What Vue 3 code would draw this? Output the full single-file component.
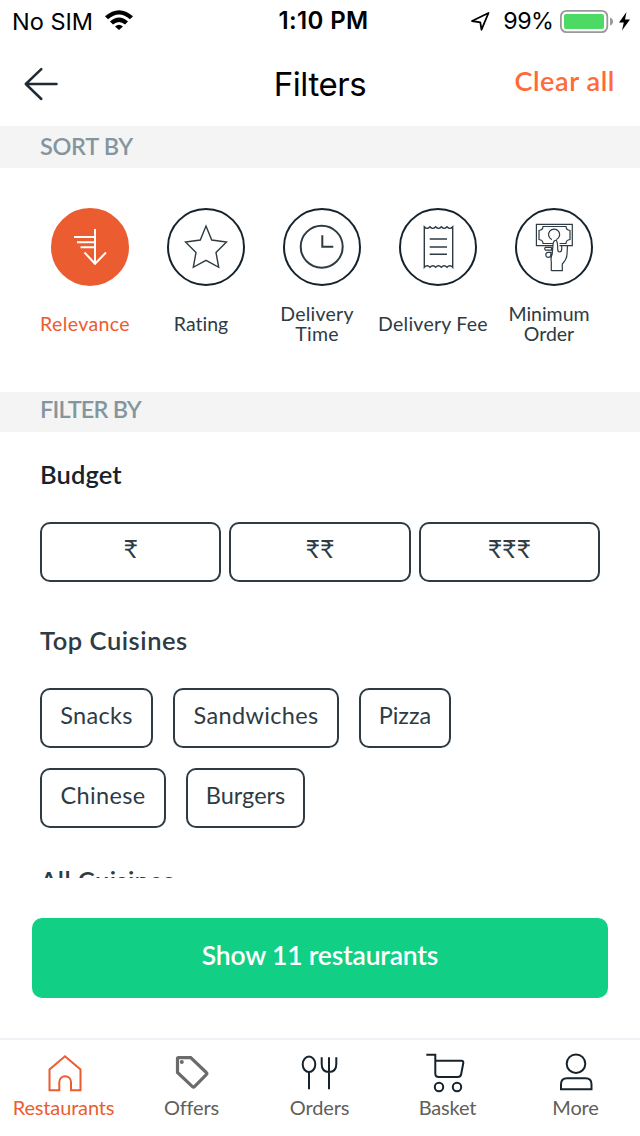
<script setup>
const sorts = [
  { id: 'relevance', label: 'Relevance', active: true },
  { id: 'rating', label: 'Rating' },
  { id: 'time', label: 'Delivery Time' },
  { id: 'fee', label: 'Delivery Fee' },
  { id: 'minimum', label: 'Minimum Order' },
]
const budgets = ['₹', '₹₹', '₹₹₹']
const cuisines = ['Snacks', 'Sandwiches', 'Pizza', 'Chinese', 'Burgers']
const tabs = ['Restaurants', 'Offers', 'Orders', 'Basket', 'More']
</script>

<template>
  <main class="screen">
    <header class="status">
      <div class="left">
        <span>No SIM</span>
        <svg class="wifi" width="28" height="20" viewBox="0 0 28 20"><path d="M0 6.2Q14-5.8 28 6.2L25 9.3Q14-.3 3 9.3ZM5 11.4Q14 3.6 23 11.4L20 14.5Q14 9.3 8 14.5ZM10 16.4Q14 13.2 18 16.4L14 20Z" /></svg>
      </div>
      <strong>1:10 PM</strong>
      <div class="right">
        <svg class="loc" width="20" height="20" viewBox="0 0 20 20"><path d="M2 10 18.5 2 11.5 18.7 10.3 11.3Z" /></svg>
        <span class="percent">99%</span>
        <svg class="battery" width="71" height="23" viewBox="0 0 71 23">
          <rect x=".9" y=".9" width="46.4" height="21.2" rx="5.5" class="shell" />
          <rect x="4" y="4" width="40" height="15" rx="2" class="charge" />
          <path d="M50 7.5q3 1 3 4t-3 4Z" class="nub" />
          <path d="M66.5 2 59 12.5h4.8L62 20.5 70 9.5h-5Z" />
        </svg>
      </div>
    </header>

    <nav class="head">
      <svg class="back" width="36" height="34" viewBox="0 0 36 34"><path d="M17.3 2.2 1.8 17 17.3 32M1.8 17H32.5" /></svg>
      <h1>Filters</h1>
      <a>Clear all</a>
    </nav>

    <section class="content">
      <h2 class="band sortband">SORT BY</h2>
      <div class="sorts">
        <div v-for="s in sorts" :key="s.id" class="sort" :class="[s.id, { active: s.active }]">
          <svg class="disc" width="78" height="78" viewBox="0 0 78 78">
            <circle class="ring" cx="39" cy="39" r="38" />
            <path v-if="s.id === 'relevance'" class="w2" d="M44 21V55.5M33.5 44.5 44 55.8 55 44.5M23 29H44M26 34.3H44M29.5 39.3H44" />
            <path v-if="s.id === 'rating'" d="M39 18 44.7 32 59.5 34 49 44.5 51.7 59.3 39 52.3 26.3 59.3 29 44.5 18.5 34 33.3 32Z" />
            <g v-if="s.id === 'time'" class="w2"><circle cx="38.7" cy="38.7" r="21" /><path d="M39.3 27.3V38.8H50.3" /></g>
            <path v-if="s.id === 'fee'" d="M25.3 59.3V18.8q2.84 3.2 5.68 0 2.84 3.2 5.68 0 2.84 3.2 5.68 0 2.84 3.2 5.68 0 2.84 3.2 5.68 0V59.3q-2.84-3.2-5.68 0-2.84-3.2-5.68 0-2.84-3.2-5.68 0-2.84-3.2-5.68 0-2.84-3.2-5.68 0ZM30.7 31H48M30.7 39H48M30.7 46.3H48" />
            <path v-if="s.id === 'minimum'" class="thin" d="M37.5 37.7H21.4V16.4H57.3V37.7H44.5M37.5 35.5H28q0-3.5-4-4V22.5q4-.5 4-4H51q0 3.5 4 4V31.5q-4 .5-4 4H44.5M36.8 31.6a5.5 5.5 0 1 1 4.6 0M36.3 62.7H47.3V56Q52 51 52 46L52.5 38M36.3 62.7V54Q35.5 50 37.2 46L38.2 35Q39 32 41.2 32.5 42.7 33.5 42.7 41q0 3 2 3t2-3V37.7M36.7 39.3H30.5q-1.600 1.400 0 2.800H36.500V39.300M36 44.400h-3a2.500 2.500 0 1 0 2.700 3.200Z" />
          </svg>
          <div class="label">{{ s.label }}</div>
        </div>
      </div>

      <h2 class="band filterband">FILTER BY</h2>
      <h3 class="dark">Budget</h3>
      <div class="budgets"><button v-for="b in budgets" :key="b">{{ b }}</button></div>
      <h3 class="top">Top Cuisines</h3>
      <div class="chips"><button v-for="c in cuisines" :key="c" :class="c.toLowerCase()">{{ c }}</button></div>
      <h3 class="all">All Cuisines</h3>
    </section>

    <button class="show">Show 11 restaurants</button>

    <footer class="tabs">
      <div v-for="(t, i) in tabs" :key="t" class="tab" :class="{ active: i === 0 }">
        <svg width="40" height="40" viewBox="0 0 40 40">
          <path v-if="i === 0" d="M5.5 38.3V17.5L21 4.3 36.5 17.5V38.3H27V30a5.85 5.85 0 0 0-11.7 0V38.3Z" />
          <g v-if="i === 1" class="tag"><path d="M6.5 5.7H18.7L34.3 20.5Q35.5 21.5 34.3 22.6L22.5 34.6Q21.5 35.5 20.5 34.6L5.5 20.5V6.7Q5.5 5.7 6.5 5.7Z" /><circle cx="9.8" cy="10" r="2" /></g>
          <g v-if="i === 2"><ellipse cx="9" cy="12.3" rx="6.3" ry="7.7" /><path d="M9 20V37.3M29 5.3V37.3M21.7 5.3V12q0 8 7.3 8t7.3-8V5.3" /></g>
          <g v-if="i === 3"><path d="M-1.7 2.8H7.3V21.5Q7.3 25 10.8 25H29.5Q32.7 25 33.2 22L35.3 11Q35.5 8.7 33.3 8.7H7.3" /><circle cx="11" cy="35" r="4.2" /><circle cx="29" cy="35" r="4.2" /></g>
          <g v-if="i === 4"><circle cx="20" cy="11.7" r="9.3" /><path d="M5 37.3V32.3Q5 26.3 11 26.3H29.5Q35.5 26.3 35.5 32.3V37.3Z" /></g>
        </svg>
        <span>{{ t }}</span>
      </div>
    </footer>
  </main>
</template>

<style>
body { margin: 0; background: #fff; }
</style>
<style scoped>
.screen { width: 640px; height: 1136px; display: flex; flex-direction: column; background: #fff; overflow: hidden; color: #2e3b43; font-family: Lato, "Noto Sans", sans-serif; font-variant-ligatures: none; }
svg { display: block; fill: none; overflow: visible; flex: none; }
h1, h2, h3 { margin: 0; font-weight: 400; }
button { font: inherit; color: inherit; background: none; border: 0; padding: 0; margin: 0; letter-spacing: inherit; }

.status { height: 41px; display: grid; grid-template-columns: 1fr 100px 1fr; align-items: center; font: 400 23.5px/41px Inter, sans-serif; color: #000; }
.status strong { font-weight: 600; font-size: 24px; line-height: 42px; letter-spacing: 0.4px; white-space: nowrap; text-align: center; padding-left: 7px; }
.status svg { fill: #000; }
.left { display: flex; align-items: center; gap: 12px; padding-left: 12px; }
.wifi { margin-top: -2px; }
.right { display: flex; align-items: center; justify-content: flex-end; padding-right: 9px; }
.status .loc { fill: none; stroke: #000; stroke-width: 1.8; stroke-linejoin: round; margin-right: 13px; }
.percent { font-size: 23.3px; line-height: 42px; letter-spacing: -0.5px; }
.battery { margin-left: 6.5px; }
.status .shell { fill: none; stroke: #999; stroke-width: 1.8; }
.status .charge { fill: #4cd964; }
.status .nub { fill: #999; }

.head { height: 85px; display: grid; grid-template-columns: 1fr 120px 1fr; align-items: center; padding: 0 24px; }
.back { stroke: #1e2b35; stroke-width: 2.5; stroke-linecap: round; stroke-linejoin: round; }
.head h1 { font: 400 33px/40px Inter, sans-serif; letter-spacing: -0.4px; text-align: center; color: #000; }
.head a { text-align: right; font-size: 27px; letter-spacing: 0.6px; line-height: 32px; font-weight: 600; color: #ff6a39; padding: 0 1px 5px 0; }

.content { height: 752px; overflow: hidden; flex: none; }
.band { height: 40px; padding-left: 40px; background: #f4f4f4; color: #84969d; font-size: 23.5px; line-height: 35px; font-weight: 600; }
.sortband { height: 42px; line-height: 40px; letter-spacing: -0.3px; }
.filterband { letter-spacing: -0.8px; }

.sorts { display: flex; padding: 40px 0 0 27px; height: 184px; }
.sort { width: 116px; }
.disc { margin-left: 24px; stroke: #2e3b43; stroke-width: 1.4; }
.ring { stroke: #16232d; stroke-width: 2; }
.w2 { stroke-width: 2; }
.thin { stroke-width: 1.2; }
.active .disc { stroke: #fff; }
.active .ring { fill: #eb5c30; stroke: #eb5c30; }
.label { height: 76px; display: flex; align-items: center; justify-content: center; text-align: center; font-size: 19.5px; letter-spacing: 0.25px; line-height: 20px; }
.rating .label, .minimum .label { letter-spacing: 0; }
.relevance .label { letter-spacing: 0.4px; }
.active .label { color: #eb5c30; }

h3 { padding-left: 40px; font-size: 25.5px; font-weight: 600; }
.dark { color: #16232d; height: 90px; line-height: 85px; letter-spacing: 0.1px; }
.budgets { display: flex; gap: 8px; padding: 0 40px; }
.budgets button { flex: 1; height: 60px; box-sizing: border-box; border: 2px solid #2e3b43; border-radius: 10px; font-size: 25px; line-height: 48px; padding-bottom: 8px; }
.top { height: 106px; line-height: 117px; letter-spacing: 0.55px; }
.chips { display: flex; flex-wrap: wrap; gap: 20px; padding: 0 160px 0 40px; letter-spacing: 0.35px; }
.chips button { height: 60px; box-sizing: border-box; border: 2px solid #2e3b43; border-radius: 10px; font-size: 23.5px; line-height: 50px; padding-bottom: 6px; }
.snacks { width: 113px; }
.sandwiches { width: 166px; }
.chips .pizza { width: 92px; letter-spacing: 0; }
.chinese { width: 126px; }
.chips .burgers { width: 119px; letter-spacing: 0; }
.all { line-height: 104px; letter-spacing: 0.4px; }

.show { flex: none; height: 80px; margin: 40px 32px; border-radius: 10px; background: #11d085; color: #fff; font-weight: 600; font-size: 26.5px; letter-spacing: -0.2px; line-height: 75px; padding-bottom: 5px; }

.tabs { display: flex; height: 96px; border-top: 2px solid #eff3f7; color: #60605a; }
.tab { width: 128px; display: flex; flex-direction: column; align-items: center; padding-top: 12px; font-size: 20px; letter-spacing: -0.15px; line-height: 31px; }
.tab span { margin-right: 1px; }
.tab svg { stroke: #16232d; stroke-width: 2; }
.tab.active { color: #eb5c30; }
.tab.active svg { stroke: #eb5c30; }
.tab .tag { stroke: #6b6b6b; stroke-width: 3.2; }
.tab .tag circle { fill: #6b6b6b; stroke: none; }
</style>
